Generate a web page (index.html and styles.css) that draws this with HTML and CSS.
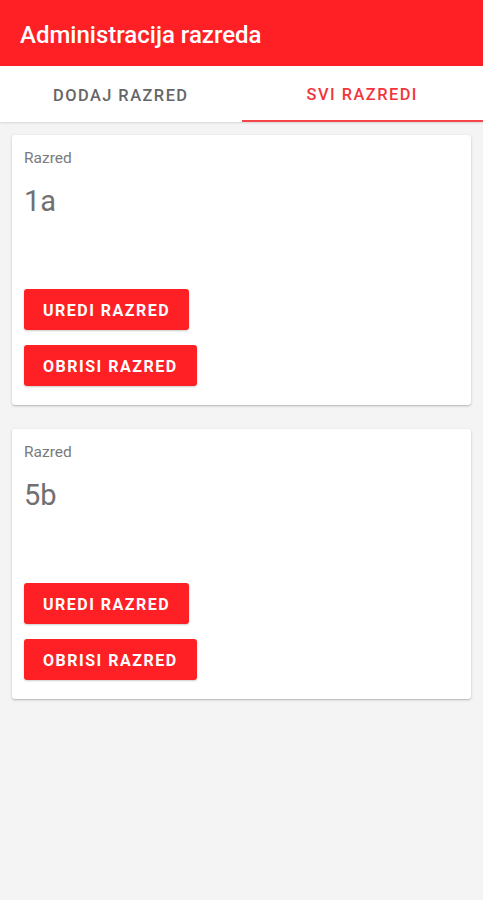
FILE: index.html
```html
<!DOCTYPE html>
<html lang="hr">
<head>
<meta charset="utf-8">
<title>Administracija razreda</title>
<link rel="stylesheet" href="styles.css">
</head>
<body>
<header class="appbar">
  <h1 class="appbar-title">Administracija razreda</h1>
</header>
<nav class="tabs">
  <div class="tab">DODAJ RAZRED</div>
  <div class="tab tab-active">SVI RAZREDI</div>
</nav>
<main class="list">
  <section class="card">
    <div class="card-label">Razred</div>
    <div class="card-value">1a</div>
    <div class="card-actions">
      <button class="btn">UREDI RAZRED</button>
      <button class="btn">OBRISI RAZRED</button>
    </div>
  </section>
  <section class="card">
    <div class="card-label">Razred</div>
    <div class="card-value">5b</div>
    <div class="card-actions">
      <button class="btn">UREDI RAZRED</button>
      <button class="btn">OBRISI RAZRED</button>
    </div>
  </section>
</main>
</body>
</html>
```
FILE: styles.css
```css
html, body {
  margin: 0;
  padding: 0;
  background: #f4f4f4;
  font-family: Roboto, "Liberation Sans", Arial, sans-serif;
  min-height: 100%;
}

.appbar {
  height: 66px;
  background: #ff2026;
  display: flex;
  align-items: center;
  padding: 0 20px;
  box-sizing: border-box;
}

.appbar-title {
  margin: 0;
  color: #ffffff;
  font-size: 24px;
  font-weight: 500;
  letter-spacing: 0;
  padding-top: 4px;
}

.tabs {
  height: 56px;
  background: #ffffff;
  display: grid;
  grid-template-columns: 1fr 1fr;
  box-shadow: 0 1px 2px rgba(0, 0, 0, 0.12);
  position: relative;
}

.tab {
  display: flex;
  align-items: center;
  justify-content: center;
  font-size: 16.4px;
  font-weight: 500;
  letter-spacing: 1.47px;
  color: #666666;
  box-sizing: border-box;
  padding-top: 2px;
}

.tab-active {
  color: #f2353b;
  border-bottom: 2px solid #f4464b;
}

.list {
  padding: 13px 12px 12px;
  display: flex;
  flex-direction: column;
  gap: 24px;
}

.card {
  background: #ffffff;
  border-radius: 3px;
  box-shadow: 0 1px 3px rgba(0, 0, 0, 0.18), 0 1px 1px rgba(0, 0, 0, 0.1);
  padding: 12px 12px 19px;
  height: 270px;
  box-sizing: border-box;
  display: flex;
  flex-direction: column;
}

.card-label {
  font-size: 15.5px;
  line-height: 22px;
  color: #7a7a7a;
}

.card-value {
  margin-top: 14px;
  font-size: 29px;
  line-height: 36px;
  color: #707070;
}

.card-actions {
  margin-top: auto;
  display: flex;
  flex-direction: column;
  align-items: flex-start;
  gap: 15px;
}

.btn {
  height: 41px;
  padding: 0 19px;
  border: none;
  border-radius: 3px;
  background: #ff2026;
  color: #ffffff;
  font-family: Roboto, "Liberation Sans", Arial, sans-serif;
  font-size: 16px;
  font-weight: 700;
  letter-spacing: 1.5px;
  box-shadow: 0 1px 2px rgba(0, 0, 0, 0.2);
  padding-top: 1px;
}
```
